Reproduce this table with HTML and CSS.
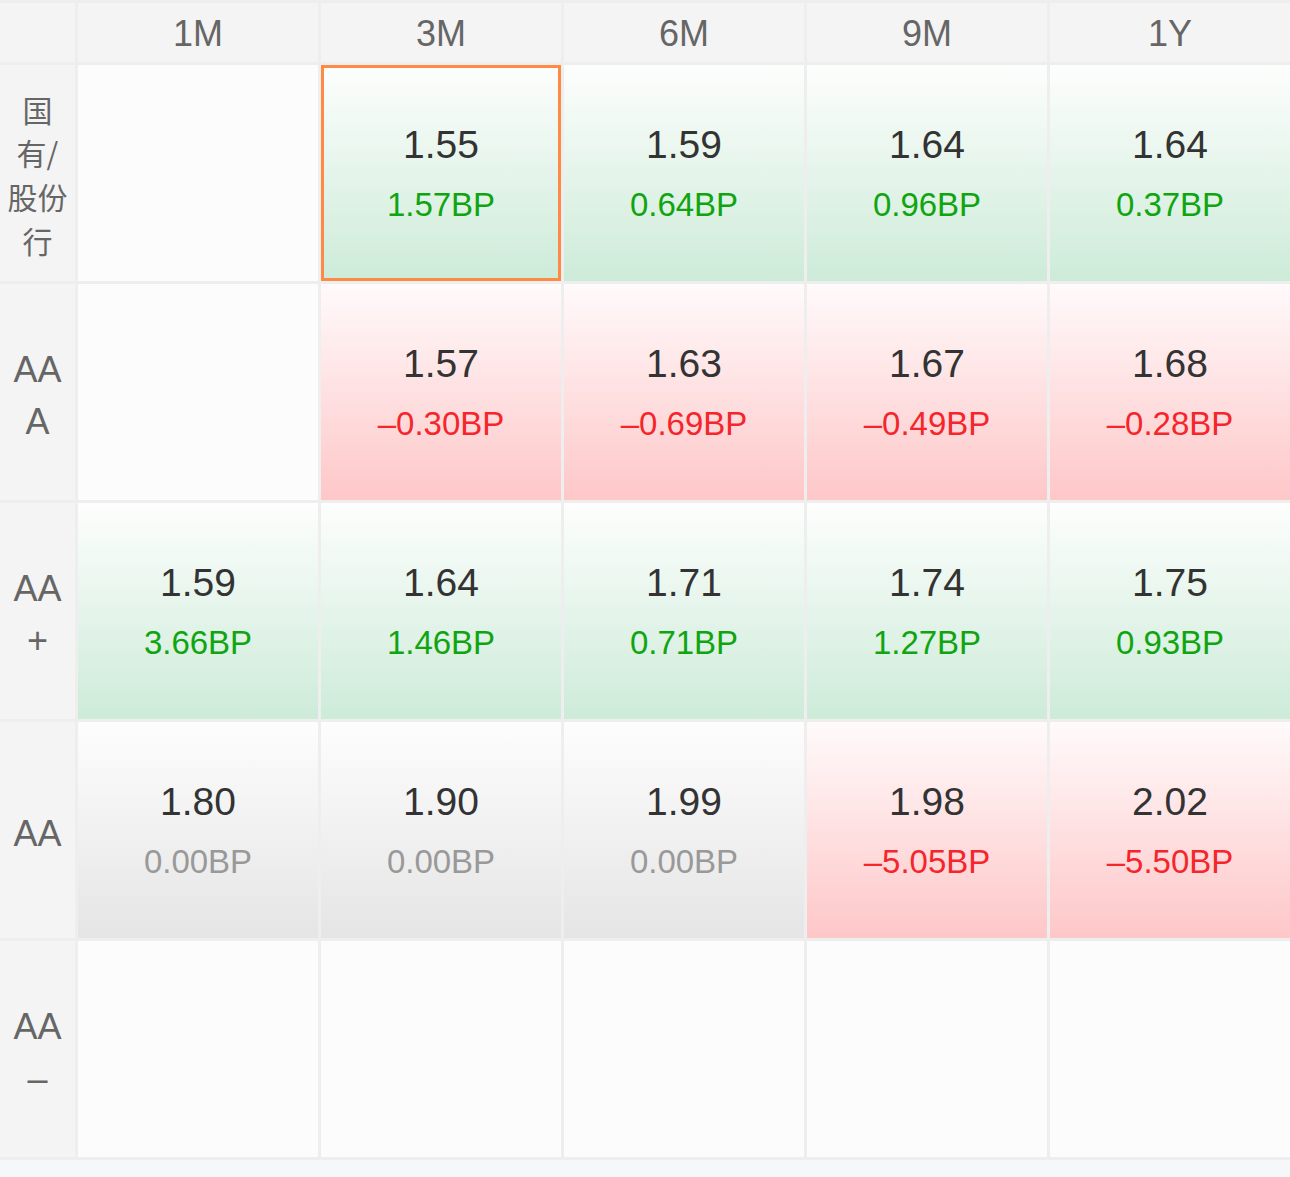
FILE: index.html
```html
<!DOCTYPE html>
<html lang="zh-CN">
<head>
<meta charset="utf-8">
<title>利率矩阵</title>
<link rel="stylesheet" href="styles.css">
</head>
<body>
<div class="matrix">
  <div class="corner"></div>
  <div class="head">1M</div>
  <div class="head">3M</div>
  <div class="head">6M</div>
  <div class="head">9M</div>
  <div class="head">1Y</div>

  <div class="label label-cn">国<br>有/<br>股份<br>行</div>
  <div class="cell empty"></div>
  <div class="cell up selected"><div class="val">1.55</div><div class="bp bp-up">1.57BP</div></div>
  <div class="cell up"><div class="val">1.59</div><div class="bp bp-up">0.64BP</div></div>
  <div class="cell up"><div class="val">1.64</div><div class="bp bp-up">0.96BP</div></div>
  <div class="cell up"><div class="val">1.64</div><div class="bp bp-up">0.37BP</div></div>

  <div class="label">AA<br>A</div>
  <div class="cell empty"></div>
  <div class="cell down"><div class="val">1.57</div><div class="bp bp-down">–0.30BP</div></div>
  <div class="cell down"><div class="val">1.63</div><div class="bp bp-down">–0.69BP</div></div>
  <div class="cell down"><div class="val">1.67</div><div class="bp bp-down">–0.49BP</div></div>
  <div class="cell down"><div class="val">1.68</div><div class="bp bp-down">–0.28BP</div></div>

  <div class="label">AA<br>+</div>
  <div class="cell up"><div class="val">1.59</div><div class="bp bp-up">3.66BP</div></div>
  <div class="cell up"><div class="val">1.64</div><div class="bp bp-up">1.46BP</div></div>
  <div class="cell up"><div class="val">1.71</div><div class="bp bp-up">0.71BP</div></div>
  <div class="cell up"><div class="val">1.74</div><div class="bp bp-up">1.27BP</div></div>
  <div class="cell up"><div class="val">1.75</div><div class="bp bp-up">0.93BP</div></div>

  <div class="label">AA</div>
  <div class="cell flat"><div class="val">1.80</div><div class="bp bp-flat">0.00BP</div></div>
  <div class="cell flat"><div class="val">1.90</div><div class="bp bp-flat">0.00BP</div></div>
  <div class="cell flat"><div class="val">1.99</div><div class="bp bp-flat">0.00BP</div></div>
  <div class="cell down"><div class="val">1.98</div><div class="bp bp-down">–5.05BP</div></div>
  <div class="cell down"><div class="val">2.02</div><div class="bp bp-down">–5.50BP</div></div>

  <div class="label">AA<br>–</div>
  <div class="cell empty"></div>
  <div class="cell empty"></div>
  <div class="cell empty"></div>
  <div class="cell empty"></div>
  <div class="cell empty"></div>
</div>
</body>
</html>
```

FILE: styles.css
```css
html, body {
  margin: 0;
  padding: 0;
}
body {
  background: #f6f7f9;
  font-family: "Liberation Sans", "Noto Sans CJK SC", sans-serif;
}
.matrix {
  display: grid;
  grid-template-columns: 75px repeat(5, 1fr);
  grid-template-rows: 59px repeat(5, 216px);
  gap: 3px;
  padding: 3px 0;
  background: #eeeeee;
}
.corner,
.head,
.label {
  background: #f4f4f4;
  color: #666666;
  box-sizing: border-box;
}
.head {
  display: flex;
  align-items: center;
  justify-content: center;
  font-size: 36px;
  padding-top: 2px;
}
.label {
  display: flex;
  align-items: center;
  justify-content: center;
  text-align: center;
  font-size: 36px;
  line-height: 52px;
  padding-top: 7px;
}
.label-cn {
  font-family: "Noto Sans CJK SC", sans-serif;
  font-size: 30px;
  line-height: 43.7px;
  padding-top: 4px;
}
.cell {
  display: flex;
  flex-direction: column;
  align-items: center;
  justify-content: center;
  padding-top: 4px;
  box-sizing: border-box;
}
.empty {
  background: #fcfcfc;
}
.up {
  background: linear-gradient(to bottom, #fdfefd 0%, #cdebd9 100%);
}
.down {
  background: linear-gradient(to bottom, #fffafb 0%, #fec7c8 100%);
}
.flat {
  background: linear-gradient(to bottom, #fdfdfd 0%, #e5e5e5 100%);
}
.selected {
  box-shadow: inset 0 0 0 3px #ff8a45;
}
.val {
  font-size: 39px;
  line-height: 60px;
  color: #333333;
}
.bp {
  font-size: 33px;
  line-height: 60px;
}
.bp-up {
  color: #10a510;
}
.bp-down {
  color: #f5262b;
}
.bp-flat {
  color: #999999;
}
```
